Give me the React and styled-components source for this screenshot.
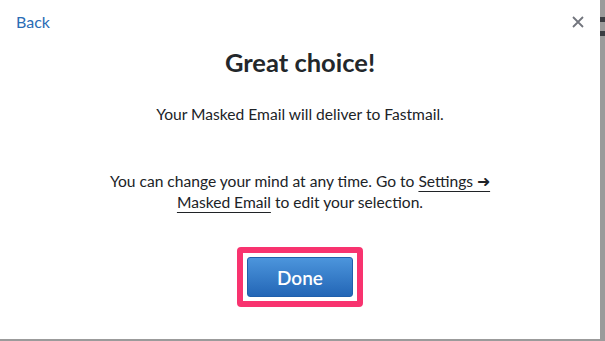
import React from "react";
import styled, { createGlobalStyle } from "styled-components";

const Global = createGlobalStyle`
  html, body {
    margin: 0;
    padding: 0;
    width: 605px;
    height: 341px;
    overflow: hidden;
    background: #9b9b9b;
    font-family: "Lato", "Liberation Sans", sans-serif;
  }
`;

const Backdrop = styled.div`
  width: 605px;
  height: 341px;
  background:
    linear-gradient(#3a3d42, #3a3d42) 600px 17px / 5px 5px no-repeat,
    linear-gradient(#3a3d42, #3a3d42) 600px 31px / 5px 5px no-repeat,
    #9b9b9b;
`;

const Modal = styled.div`
  width: 600px;
  height: 339px;
  background: #ffffff;
  display: flex;
  flex-direction: column;
  align-items: center;
  padding-top: 12px;
  box-sizing: border-box;
  color: #202327;
`;

const Header = styled.div`
  align-self: stretch;
  display: flex;
  justify-content: space-between;
  align-items: center;
  height: 20px;
  padding: 0 16px;
`;

const BackLink = styled.a`
  color: #2a6cb5;
  font-size: 16px;
  line-height: 20px;
  text-decoration: none;
  cursor: pointer;
`;

const CloseButton = styled.button`
  border: 0;
  background: none;
  padding: 0;
  width: 12px;
  height: 12px;
  display: flex;
  cursor: pointer;
`;

const Title = styled.h2`
  margin: 15px 0 0;
  font-size: 25.5px;
  line-height: 30px;
  font-weight: 700;
  color: #23272b;
`;

const Text = styled.p`
  margin: ${(p) => p.$gap}px 0 0;
  font-size: 15.6px;
  line-height: 21px;
  text-align: center;
`;

const Link = styled.a`
  color: inherit;
  text-decoration: underline;
  text-underline-offset: 4px;
  text-decoration-thickness: 1px;
`;

const Highlight = styled.div`
  margin-top: 34px;
  border: 6px solid #f8336f;
  border-radius: 4px;
  padding: 4px;
  background: #fff;
  display: flex;
`;

const DoneButton = styled.button`
  width: 106px;
  height: 40px;
  border: 1px solid #1f5fac;
  border-radius: 3px;
  background: linear-gradient(#4c95dc, #2366b6);
  color: #fff;
  font-family: inherit;
  font-size: 19px;
  font-weight: 600;
  cursor: pointer;
`;

export default function App() {
  return (
    <>
      <Global />
      <Backdrop>
        <Modal>
          <Header>
            <BackLink>Back</BackLink>
            <CloseButton aria-label="Close">
              <svg width="12" height="12" viewBox="0 0 12 12">
                <path d="M1 1 L11 11 M11 1 L1 11" stroke="#72757d" strokeWidth="1.8" />
              </svg>
            </CloseButton>
          </Header>
          <Title>Great choice!</Title>
          <Text $gap={27}>Your Masked Email will deliver to Fastmail.</Text>
          <Text $gap={46}>
            You can change your mind at any time. Go to <Link>Settings ➜</Link>
            <br />
            <Link>Masked Email</Link> to edit your selection.
          </Text>
          <Highlight>
            <DoneButton>Done</DoneButton>
          </Highlight>
        </Modal>
      </Backdrop>
    </>
  );
}
